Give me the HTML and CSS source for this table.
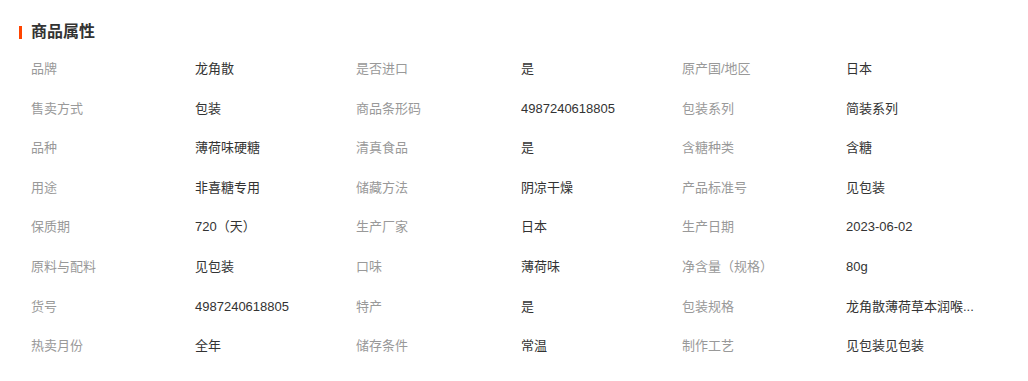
FILE: index.html
```html
<!DOCTYPE html>
<html lang="zh-CN">
<head>
<meta charset="utf-8">
<title>商品属性</title>
<link rel="stylesheet" href="styles.css">
</head>
<body>
<section class="attrs">
  <h2 class="attrs-title">商品属性</h2>
  <div class="attrs-grid">
    <span class="k">品牌</span><span class="v">龙角散</span>
    <span class="k">是否进口</span><span class="v">是</span>
    <span class="k">原产国/地区</span><span class="v">日本</span>

    <span class="k">售卖方式</span><span class="v">包装</span>
    <span class="k">商品条形码</span><span class="v">4987240618805</span>
    <span class="k">包装系列</span><span class="v">简装系列</span>

    <span class="k">品种</span><span class="v">薄荷味硬糖</span>
    <span class="k">清真食品</span><span class="v">是</span>
    <span class="k">含糖种类</span><span class="v">含糖</span>

    <span class="k">用途</span><span class="v">非喜糖专用</span>
    <span class="k">储藏方法</span><span class="v">阴凉干燥</span>
    <span class="k">产品标准号</span><span class="v">见包装</span>

    <span class="k">保质期</span><span class="v">720（天）</span>
    <span class="k">生产厂家</span><span class="v">日本</span>
    <span class="k">生产日期</span><span class="v">2023-06-02</span>

    <span class="k">原料与配料</span><span class="v">见包装</span>
    <span class="k">口味</span><span class="v">薄荷味</span>
    <span class="k">净含量（规格）</span><span class="v">80g</span>

    <span class="k">货号</span><span class="v">4987240618805</span>
    <span class="k">特产</span><span class="v">是</span>
    <span class="k">包装规格</span><span class="v">龙角散薄荷草本润喉...</span>

    <span class="k">热卖月份</span><span class="v">全年</span>
    <span class="k">储存条件</span><span class="v">常温</span>
    <span class="k">制作工艺</span><span class="v">见包装见包装</span>
  </div>
</section>
</body>
</html>
```

FILE: styles.css
```css
html, body {
  margin: 0;
  padding: 0;
  background: #fff;
}

body {
  font-family: "Liberation Sans", "Noto Sans CJK SC", sans-serif;
  font-size: 13px;
  color: #333;
}

.attrs {
  padding: 22px 0 0 19px;
}

.attrs-title {
  margin: 0 0 7px 0;
  height: 20px;
  line-height: 20px;
  font-size: 16px;
  font-weight: bold;
  color: #333;
  display: flex;
  align-items: center;
}

.attrs-title::before {
  content: "";
  width: 3px;
  height: 13px;
  background: #ff4400;
  margin-right: 9px;
}

.attrs-grid {
  display: grid;
  grid-template-columns: 164px 161px 165px 161px 164px 1fr;
  padding-left: 12px;
}

.k, .v {
  padding: 12px 0;
  line-height: 15.6px;
  white-space: nowrap;
}

.k {
  color: #999;
}

.v {
  color: #333;
}
```
